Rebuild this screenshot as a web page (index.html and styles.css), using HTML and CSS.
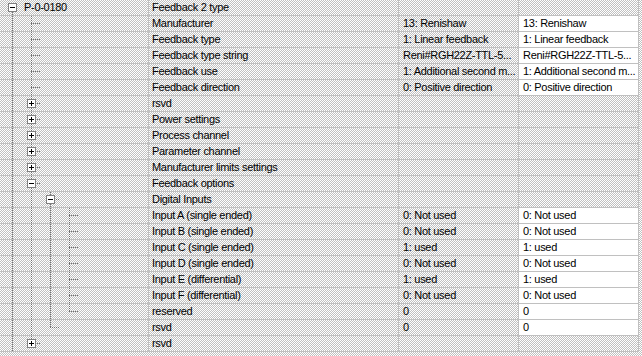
FILE: index.html
```html
<!DOCTYPE html>
<html lang="en">
<head>
  <meta charset="UTF-8">
  <title>Parameter tree</title>
  <link rel="stylesheet" href="styles.css">
</head>
<body>

  <div class="grid">
    <div class="row">
      <div class="tree"><span class="g x0 low"></span><span class="box x0 open"></span><span class="label">P-0-0180</span></div>
      <div class="cell name">Feedback 2 type</div>
      <div class="cell val"></div>
      <div class="cell val"></div>
    </div>
    <div class="row">
      <div class="tree"><span class="g x0"></span><span class="g x1"></span><span class="t x1"></span></div>
      <div class="cell name">Manufacturer</div>
      <div class="cell val">13: Renishaw</div>
      <div class="cell val edit">13: Renishaw</div>
    </div>
    <div class="row">
      <div class="tree"><span class="g x0"></span><span class="g x1"></span><span class="t x1"></span></div>
      <div class="cell name">Feedback type</div>
      <div class="cell val">1: Linear feedback</div>
      <div class="cell val edit">1: Linear feedback</div>
    </div>
    <div class="row">
      <div class="tree"><span class="g x0"></span><span class="g x1"></span><span class="t x1"></span></div>
      <div class="cell name">Feedback type string</div>
      <div class="cell val">Reni#RGH22Z-TTL-5...</div>
      <div class="cell val edit">Reni#RGH22Z-TTL-5...</div>
    </div>
    <div class="row">
      <div class="tree"><span class="g x0"></span><span class="g x1"></span><span class="t x1"></span></div>
      <div class="cell name">Feedback use</div>
      <div class="cell val">1: Additional second m...</div>
      <div class="cell val edit">1: Additional second m...</div>
    </div>
    <div class="row">
      <div class="tree"><span class="g x0"></span><span class="g x1"></span><span class="t x1"></span></div>
      <div class="cell name">Feedback direction</div>
      <div class="cell val">0: Positive direction</div>
      <div class="cell val edit">0: Positive direction</div>
    </div>
    <div class="row">
      <div class="tree"><span class="g x0"></span><span class="g x1"></span><span class="t x1"></span><span class="box x1"></span></div>
      <div class="cell name">rsvd</div>
      <div class="cell val"></div>
      <div class="cell val"></div>
    </div>
    <div class="row">
      <div class="tree"><span class="g x0"></span><span class="g x1"></span><span class="t x1"></span><span class="box x1"></span></div>
      <div class="cell name">Power settings</div>
      <div class="cell val"></div>
      <div class="cell val"></div>
    </div>
    <div class="row">
      <div class="tree"><span class="g x0"></span><span class="g x1"></span><span class="t x1"></span><span class="box x1"></span></div>
      <div class="cell name">Process channel</div>
      <div class="cell val"></div>
      <div class="cell val"></div>
    </div>
    <div class="row">
      <div class="tree"><span class="g x0"></span><span class="g x1"></span><span class="t x1"></span><span class="box x1"></span></div>
      <div class="cell name">Parameter channel</div>
      <div class="cell val"></div>
      <div class="cell val"></div>
    </div>
    <div class="row">
      <div class="tree"><span class="g x0"></span><span class="g x1"></span><span class="t x1"></span><span class="box x1"></span></div>
      <div class="cell name">Manufacturer limits settings</div>
      <div class="cell val"></div>
      <div class="cell val"></div>
    </div>
    <div class="row">
      <div class="tree"><span class="g x0"></span><span class="g x1"></span><span class="t x1"></span><span class="box x1 open"></span></div>
      <div class="cell name">Feedback options</div>
      <div class="cell val"></div>
      <div class="cell val"></div>
    </div>
    <div class="row">
      <div class="tree"><span class="g x0"></span><span class="g x1"></span><span class="g x2"></span><span class="t x2"></span><span class="box x2 open"></span></div>
      <div class="cell name">Digital Inputs</div>
      <div class="cell val"></div>
      <div class="cell val"></div>
    </div>
    <div class="row">
      <div class="tree"><span class="g x0"></span><span class="g x1"></span><span class="g x2"></span><span class="g x3"></span><span class="t x3"></span></div>
      <div class="cell name">Input A (single ended)</div>
      <div class="cell val">0: Not used</div>
      <div class="cell val edit">0: Not used</div>
    </div>
    <div class="row">
      <div class="tree"><span class="g x0"></span><span class="g x1"></span><span class="g x2"></span><span class="g x3"></span><span class="t x3"></span></div>
      <div class="cell name">Input B (single ended)</div>
      <div class="cell val">0: Not used</div>
      <div class="cell val edit">0: Not used</div>
    </div>
    <div class="row">
      <div class="tree"><span class="g x0"></span><span class="g x1"></span><span class="g x2"></span><span class="g x3"></span><span class="t x3"></span></div>
      <div class="cell name">Input C (single ended)</div>
      <div class="cell val">1: used</div>
      <div class="cell val edit">1: used</div>
    </div>
    <div class="row">
      <div class="tree"><span class="g x0"></span><span class="g x1"></span><span class="g x2"></span><span class="g x3"></span><span class="t x3"></span></div>
      <div class="cell name">Input D (single ended)</div>
      <div class="cell val">0: Not used</div>
      <div class="cell val edit">0: Not used</div>
    </div>
    <div class="row">
      <div class="tree"><span class="g x0"></span><span class="g x1"></span><span class="g x2"></span><span class="g x3"></span><span class="t x3"></span></div>
      <div class="cell name">Input E (differential)</div>
      <div class="cell val">1: used</div>
      <div class="cell val edit">1: used</div>
    </div>
    <div class="row">
      <div class="tree"><span class="g x0"></span><span class="g x1"></span><span class="g x2"></span><span class="g x3"></span><span class="t x3"></span></div>
      <div class="cell name">Input F (differential)</div>
      <div class="cell val">0: Not used</div>
      <div class="cell val edit">0: Not used</div>
    </div>
    <div class="row">
      <div class="tree"><span class="g x0"></span><span class="g x1"></span><span class="g x2"></span><span class="g x3 half"></span><span class="t x3"></span></div>
      <div class="cell name">reserved</div>
      <div class="cell val">0</div>
      <div class="cell val edit">0</div>
    </div>
    <div class="row">
      <div class="tree"><span class="g x0"></span><span class="g x1"></span><span class="g x2 half"></span><span class="t x2"></span></div>
      <div class="cell name">rsvd</div>
      <div class="cell val">0</div>
      <div class="cell val edit">0</div>
    </div>
    <div class="row">
      <div class="tree"><span class="g x0"></span><span class="g x1 half"></span><span class="t x1"></span><span class="box x1"></span></div>
      <div class="cell name">rsvd</div>
      <div class="cell val"></div>
      <div class="cell val"></div>
    </div>
  </div>

</body>
</html>
```

FILE: styles.css
```css
* {
  box-sizing: border-box;
}
body {
  margin: 0;
  height: 356px;
  overflow: hidden;
  font-family: 'Liberation Sans', Arial, sans-serif;
  font-size: 11px;
  letter-spacing: -0.3px;
  color: #000;
  /* 50% dither like the old disabled-grid look */
  background: repeating-conic-gradient(#c0c0c0 0 25%, #fff 0 50%) 0 0 / 2px 2px;
}

.grid {
  width: 640px;
}

.row {
  display: grid;
  grid-template-columns: 149px 250px 120px 120px;
  height: 16px;
}

.tree,
.cell {
  border-right: 1px solid #c0c0c0;
  border-bottom: 1px solid #c0c0c0;
  line-height: 15px;
  white-space: nowrap;
  overflow: hidden;
}

.tree {
  position: relative;
}

.cell {
  padding-left: 3px;
}

.val {
  padding-left: 4px;
}

.edit {
  background: #fff;
}

.label {
  position: absolute;
  left: 24px;
  top: 0;
}

/* tree connectors, 1px on / 1px off */
.g {
  position: absolute;
  top: 0;
  bottom: -1px;
  width: 1px;
  background: repeating-linear-gradient(to bottom, #707070 0 1px, transparent 1px 2px);
}
.g.low {
  top: 8px;
}
.g.half {
  bottom: 8px;
}
.t {
  position: absolute;
  top: 7px;
  width: 9px;
  height: 1px;
  background: repeating-linear-gradient(to right, #707070 0 1px, transparent 1px 2px);
}
.x0 { left: 12px; }
.x1 { left: 31px; }
.x2 { left: 50px; }
.x3 { left: 69px; }

.box {
  position: absolute;
  top: 3px;
  width: 9px;
  height: 9px;
  margin-left: -4px;
  border: 1px solid #808080;
  background: #fff;
}
.box::before,
.box::after {
  content: "";
  position: absolute;
  background: #000;
}
.box::before {
  left: 1px;
  top: 3px;
  width: 5px;
  height: 1px;
}
.box::after {
  left: 3px;
  top: 1px;
  width: 1px;
  height: 5px;
}
.box.open::after {
  display: none;
}
```
